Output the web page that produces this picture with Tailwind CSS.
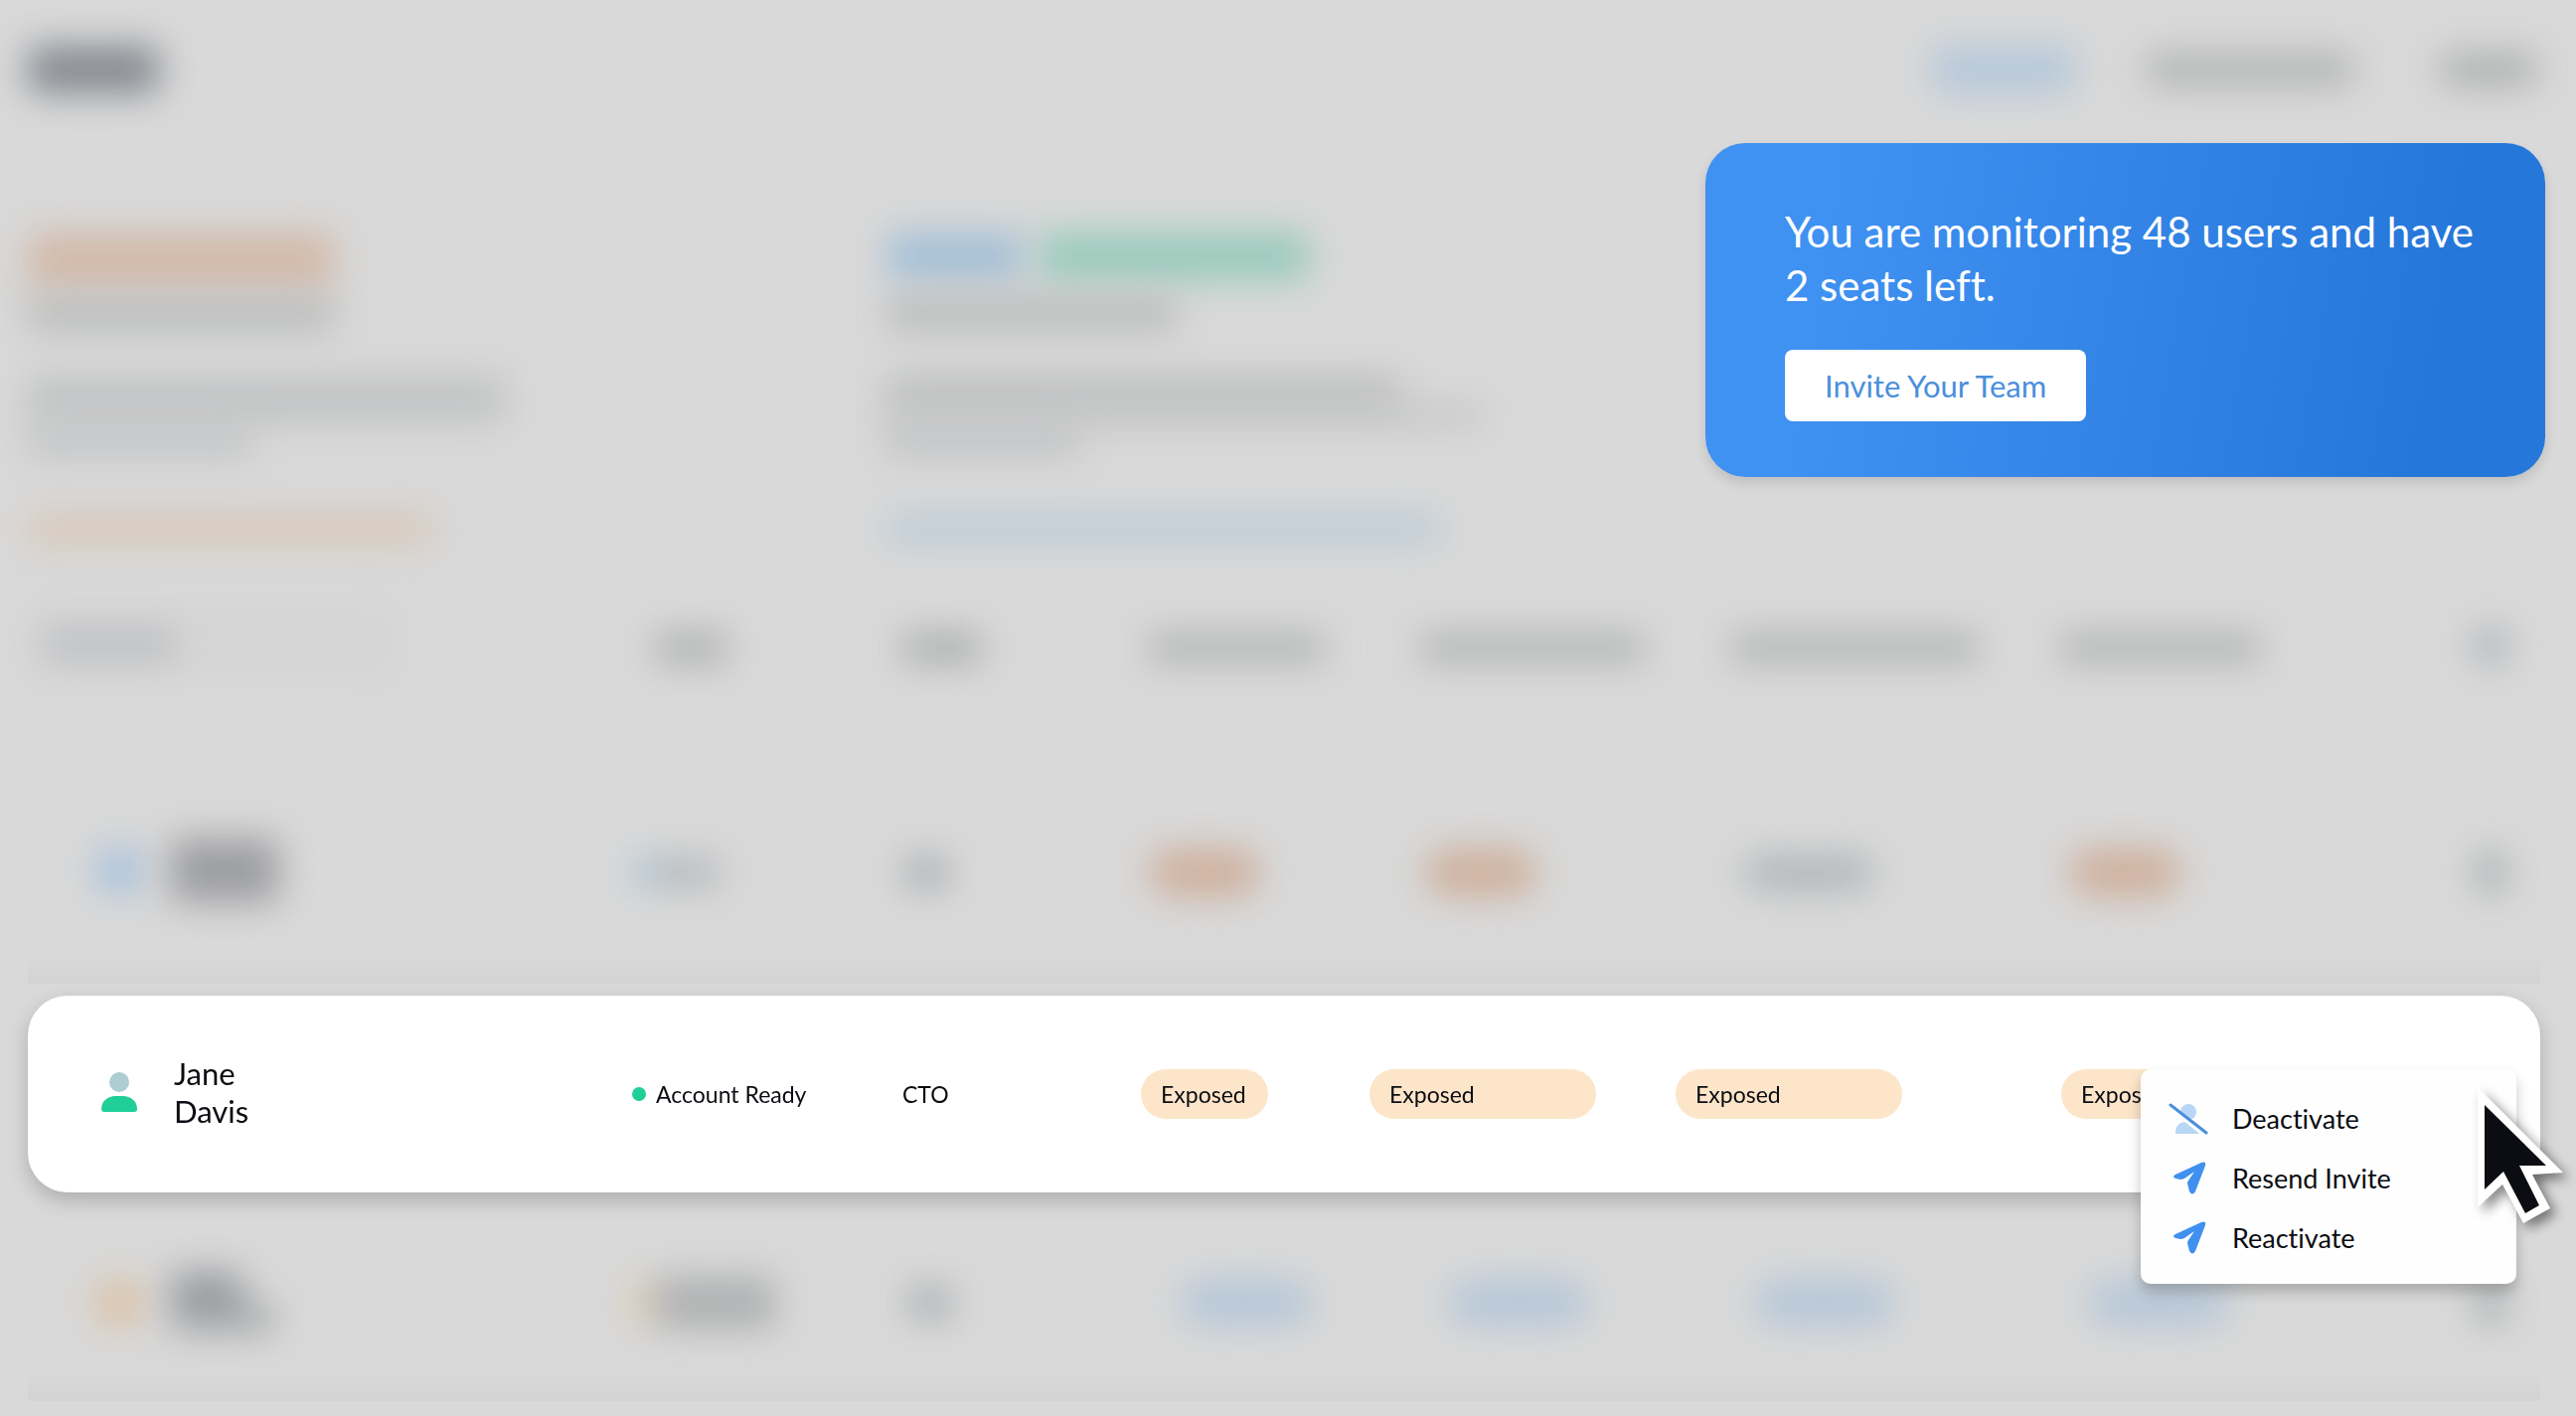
<!DOCTYPE html>
<html lang="en">
<head>
    <meta charset="UTF-8">
    <meta name="viewport" content="width=device-width, initial-scale=1.0">
    <title>Team Monitoring</title>
    <script src="https://cdn.jsdelivr.net/npm/@tailwindcss/browser@4"></script>
</head>
<body class="bg-[#d9d9d9] font-[Lato,sans-serif] text-[#0b0d12] [font-variant-ligatures:none] min-h-screen overflow-hidden">
    <!-- Header -->
    <header class="h-36 pl-7 pr-10 pb-1 flex items-center justify-between">
        <div class="w-33 h-12 bg-[#84888f] rounded-lg blur-[18px]"></div>
        <nav class="flex items-center gap-18">
            <a href="#" aria-label="Dashboard" class="w-36 h-12 bg-[#b5c8da] rounded-lg blur-[18px]"></a>
            <a href="#" aria-label="Account" class="w-52 h-8 bg-[#b0b2b3] rounded-lg blur-[18px]"></a>
            <a href="#" aria-label="Log out" class="w-24 h-8 bg-[#acaeaf] rounded-lg blur-[18px] ml-4"></a>
        </nav>
    </header>

    <!-- Summary -->
    <section class="flex pl-7 pr-[31px] h-[446px]">
        <div class="w-[865px] pt-[90px]">
            <div class="w-[308px] h-14 bg-[#d2b9a8] rounded-lg blur-[18px]"></div>
            <div class="w-[308px] h-7 bg-[#b4b6b6] mt-3 blur-[18px]"></div>
            <div class="w-[480px] h-12 bg-[#c1c3c4] mt-12 blur-[18px]"></div>
            <div class="w-56 h-7 bg-[#c0c2c4] mt-1 blur-[18px]"></div>
            <div class="w-[408px] h-7 bg-[#d8c5b4] mt-15 blur-[18px]"></div>
        </div>
        <div class="flex-1 pt-[90px]">
            <div class="flex gap-4">
                <div class="w-34 h-12 bg-[#a3bfd6] rounded-lg blur-[18px]"></div>
                <div class="w-68 h-12 bg-[#98cabb] rounded-lg blur-[18px]"></div>
            </div>
            <div class="w-[290px] h-7 bg-[#b4b6b6] mt-5 blur-[18px]"></div>
            <div class="w-[516px] h-8 bg-[#bcbebf] mt-12 blur-[18px]"></div>
            <div class="w-[600px] h-4 bg-[#bcbebf] blur-[18px]"></div>
            <div class="w-48 h-7 bg-[#bfc1c3] mt-1 blur-[18px]"></div>
            <div class="w-[556px] h-7 bg-[#b9cad6] mt-15 blur-[18px]"></div>
        </div>
        <div class="w-[845px] h-[336px] pt-[62px] pl-20 pr-10 rounded-[40px] bg-linear-100 from-[#3f91f2] from-15% to-[#2677da] to-85% shadow-[0_6px_12px_rgba(0,0,0,0.12)]">
            <h1 class="text-[42px] leading-[54px] text-white">You are monitoring 48 users and have 2 seats left.</h1>
            <button type="button" class="mt-[38px] h-18 px-10 rounded-lg bg-white text-[31px] text-[#4a8fdc]">Invite Your Team</button>
        </div>
    </section>

    <!-- Users -->
    <main class="relative pl-7 pr-9">
        <table class="w-full table-fixed border-separate border-spacing-x-0 border-spacing-y-3 text-left">
            <colgroup>
                <col class="w-[608px]">
                <col class="w-[272px]">
                <col class="w-[240px]">
                <col class="w-[230px]">
                <col class="w-[308px]">
                <col class="w-[388px]">
                <col class="w-[416px]">
                <col class="w-[66px]">
            </colgroup>
            <thead>
                <tr class="h-[164px]">
                    <th class="align-top pt-1">
                        <div class="w-[372px] h-20 pl-4 pt-7 rounded-lg bg-[#d5d5d5] blur-[18px]">
                            <div class="w-33 h-7 bg-[#b9bbbe]"></div>
                        </div>
                    </th>
                    <th class="align-top pt-9 pl-6"><div class="w-18 h-7 bg-[#aaacad] blur-[18px]"></div></th>
                    <th class="align-top pt-9"><div class="w-20 h-7 bg-[#a8aaab] blur-[18px]"></div></th>
                    <th class="align-top pt-9 pl-2"><div class="w-44 h-7 bg-[#b0b2b2] blur-[18px]"></div></th>
                    <th class="align-top pt-9 pl-13"><div class="w-56 h-7 bg-[#b0b2b2] blur-[18px]"></div></th>
                    <th class="align-top pt-9 pl-14"><div class="w-62 h-7 bg-[#b0b2b2] blur-[18px]"></div></th>
                    <th class="align-top pt-9"><div class="w-50 h-7 bg-[#b0b2b2] blur-[18px]"></div></th>
                    <th class="align-top pt-8"><div class="w-8 h-8 bg-[#a8acb2] blur-[18px]"></div></th>
                </tr>
            </thead>
            <tbody>
                <tr class="h-[212px] bg-linear-to-b from-transparent from-85% to-black/3">
                    <td class="pb-4">
                        <div class="flex items-center gap-7 pl-17">
                            <div class="w-12 h-12 rounded-full bg-[#a3c0dc] blur-[18px]"></div>
                            <div class="w-27 h-16 bg-[#9c9da0] blur-[18px]"></div>
                        </div>
                    </td>
                    <td class="pb-3">
                        <div class="flex items-center blur-[18px]">
                            <div class="w-5 h-7 bg-[#a8cce4]"></div>
                            <div class="w-17 h-7 bg-[#b2b5b8]"></div>
                        </div>
                    </td>
                    <td class="pb-3 pl-1"><div class="w-10 h-7 bg-[#9fa3a8] blur-[18px]"></div></td>
                    <td class="pb-3 pl-2"><div class="w-28 h-12 rounded-full bg-[#ceaf9b] blur-[18px]"></div></td>
                    <td class="pb-3 pl-14"><div class="w-28 h-12 rounded-full bg-[#ceaf9b] blur-[18px]"></div></td>
                    <td class="pb-3 pl-17"><div class="w-33 h-9 rounded-full bg-[#b0b5b8] blur-[18px]"></div></td>
                    <td class="pb-3 pl-2"><div class="w-28 h-12 rounded-full bg-[#ceaf9b] blur-[18px]"></div></td>
                    <td class="pb-3 pl-1"><div class="w-6 h-10 bg-[#9fa5a8] blur-[18px]"></div></td>
                </tr>
                <tr class="h-[198px] drop-shadow-[0_8px_10px_rgba(0,0,0,0.2)]">
                    <td class="bg-white rounded-l-[40px] pb-1">
                        <div class="flex items-center gap-[37px] pl-[74px]">
                            <svg class="w-9 h-10" viewBox="0 0 36 40">
                                <circle cx="18" cy="10" r="10" fill="#accdd2"/>
                                <path d="M0 37C0 29 7 24 14 24H22C29 24 36 29 36 37Q36 40 33 40H3Q0 40 0 37Z" fill="#20cf98"/>
                            </svg>
                            <div class="text-[31px] leading-[38px]">Jane<br>Davis</div>
                        </div>
                    </td>
                    <td class="bg-white">
                        <div class="flex items-center gap-[10px] text-[23px]">
                            <span class="w-[14px] h-[14px] rounded-full bg-[#20cf98]"></span>Account Ready
                        </div>
                    </td>
                    <td class="bg-white text-[23px]">CTO</td>
                    <td class="bg-white"><div class="w-32 h-[50px] pl-5 rounded-full bg-[#fde5c9] text-[23px] leading-[50px]">Exposed</div></td>
                    <td class="bg-white"><div class="w-57 h-[50px] pl-5 rounded-full bg-[#fde5c9] text-[23px] leading-[50px]">Exposed</div></td>
                    <td class="bg-white"><div class="w-57 h-[50px] pl-5 rounded-full bg-[#fde5c9] text-[23px] leading-[50px]">Exposed</div></td>
                    <td class="bg-white"><div class="w-32 h-[50px] pl-5 rounded-full bg-[#fde5c9] text-[23px] leading-[50px]">Exposed</div></td>
                    <td class="bg-white rounded-r-[40px]"></td>
                </tr>
                <tr class="h-[198px] bg-linear-to-b from-transparent from-85% to-black/3">
                    <td>
                        <div class="flex items-center gap-7 pl-17">
                            <div class="w-12 h-12 rounded-full bg-[#dcbf9f] blur-[18px]"></div>
                            <div class="blur-[18px]">
                                <div class="w-18 h-8 bg-[#94969a]"></div>
                                <div class="w-26 h-7 bg-[#a4a6a8]"></div>
                            </div>
                        </div>
                    </td>
                    <td>
                        <div class="flex items-center gap-2 blur-[18px]">
                            <div class="w-4 h-10 bg-[#dfc49f]"></div>
                            <div class="w-30 h-13 bg-[#aeb0b1]"></div>
                        </div>
                    </td>
                    <td class="pl-2"><div class="w-10 h-7 bg-[#a0a4a8] blur-[18px]"></div></td>
                    <td class="pl-10"><div class="w-33 h-11 rounded-full bg-[#b3c6d8] blur-[18px]"></div></td>
                    <td class="pl-20"><div class="w-35 h-11 rounded-full bg-[#b3c6d8] blur-[18px]"></div></td>
                    <td class="pl-20"><div class="w-35 h-11 rounded-full bg-[#b3c6d8] blur-[18px]"></div></td>
                    <td class="pl-7"><div class="w-35 h-11 rounded-full bg-[#b3c6d8] blur-[18px]"></div></td>
                    <td class="pl-1"><div class="w-6 h-10 bg-[#9fa5a8] blur-[18px]"></div></td>
                </tr>
            </tbody>
        </table>

        <!-- Row menu -->
        <div class="absolute right-15 top-[486px] w-[378px] h-[216px] pt-5 pl-7 flex flex-col rounded-[10px] bg-[#fefefe] text-[27px] shadow-[0_8px_14px_rgba(0,0,0,0.22)]">
            <button type="button" class="h-15 flex items-center gap-6 text-left">
                <svg class="w-10 h-9" viewBox="0 0 40 36">
                    <circle cx="20" cy="11" r="8" fill="#b8d7f7"/>
                    <path d="M7 33V30C8 24 12 21 17 21L34 33Z" fill="#b8d7f7"/>
                    <path d="M1 6L37 35" stroke="#fefefe" stroke-width="4"/>
                    <path d="M2 4L38 32" stroke="#4a8fdc" stroke-width="3" stroke-linecap="round"/>
                </svg>
                Deactivate
            </button>
            <button type="button" class="h-15 flex items-center gap-6 text-left">
                <svg class="w-10 h-9" viewBox="0 0 40 36">
                    <path d="M7 14L33 2Q38 0 37 5L27 31Q24 36 21 31L19 23Q19 21 20 20L26 11L16 18Q14 19 12 19L7 18Q3 16 7 14Z" fill="#4090f0"/>
                </svg>
                Resend Invite
            </button>
            <button type="button" class="h-15 flex items-center gap-6 text-left">
                <svg class="w-10 h-9" viewBox="0 0 40 36">
                    <path d="M7 14L33 2Q38 0 37 5L27 31Q24 36 21 31L19 23Q19 21 20 20L26 11L16 18Q14 19 12 19L7 18Q3 16 7 14Z" fill="#4090f0"/>
                </svg>
                Reactivate
            </button>
        </div>

        <!-- Mouse pointer -->
        <svg class="absolute right-[13px] top-[504px] w-[88px] h-[138px] drop-shadow-[6px_6px_6px_rgba(0,0,0,0.45)]" viewBox="0 0 88 138">
            <path d="M2 0L88 86L57 88L75 122L48 137L27 98L2 121Z" fill="#fff"/>
            <path d="M9 18L71 79H44L64 119L50 127L28 85L9 103Z" fill="#0b0d12"/>
        </svg>
    </main>
</body>
</html>
